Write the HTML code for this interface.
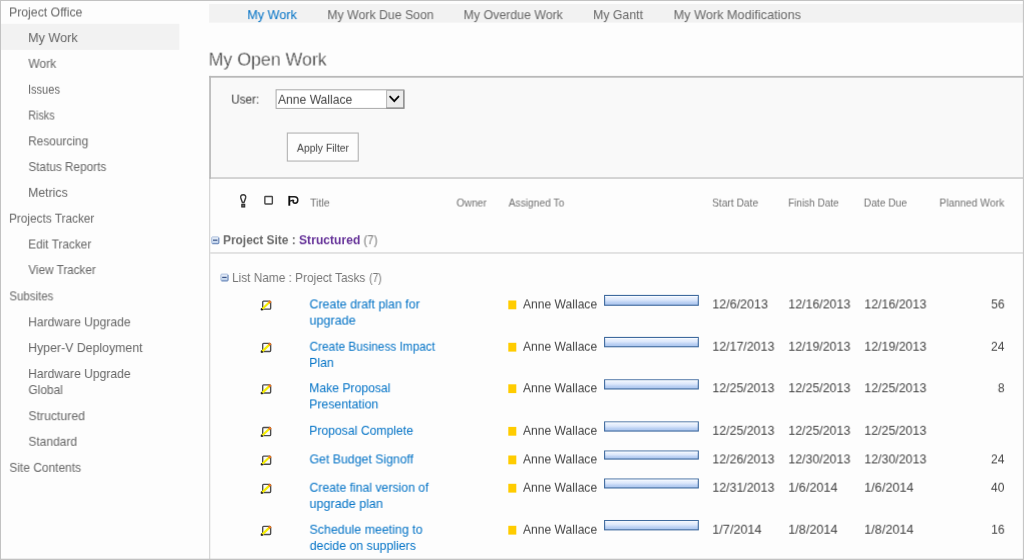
<!DOCTYPE html>
<html lang="en">
<head>
<meta charset="utf-8">
<title>My Open Work</title>
<style>
html,body{margin:0;padding:0;}
body{width:1024px;height:560px;position:relative;overflow:hidden;background:#fdfdfd;font-family:"Liberation Sans",sans-serif;}
.t{position:absolute;transform-origin:0 0;white-space:nowrap;line-height:16px;margin:0;padding:0;font-weight:400;text-decoration:none;display:block;z-index:2;}
#gfx{position:absolute;left:0;top:0;width:1024px;height:560px;z-index:1;}
</style>
</head>
<body>

<svg id="gfx" width="1024" height="560" viewBox="0 0 1024 560" aria-hidden="true">
<defs><linearGradient id="pb" x1="0" y1="0" x2="0" y2="1"><stop offset="0" stop-color="#f4f8ff"/><stop offset="0.45" stop-color="#dde8fb"/><stop offset="0.7" stop-color="#bdd2f4"/><stop offset="1" stop-color="#a9c3ec"/></linearGradient><linearGradient id="gi" x1="0" y1="0" x2="0" y2="1"><stop offset="0" stop-color="#eef3fb"/><stop offset="1" stop-color="#b9cde8"/></linearGradient></defs>
<rect x="1" y="23.8" width="178.3" height="26.1" fill="#f2f2f2"/>
<rect x="209.1" y="4.0" width="814" height="18.7" fill="#f2f2f2"/>
<rect x="209.2" y="75.9" width="814" height="102.8" fill="#f9f9f9"/>
<rect x="209.2" y="75.9" width="814" height="1.8" fill="#b9b9b9"/>
<rect x="209.2" y="177.15" width="814" height="1.75" fill="#cfcfcf"/>
<rect x="209.2" y="75.9" width="1.7" height="103" fill="#b9b9b9"/>
<rect x="209.25" y="178.5" width="0.95" height="381.5" fill="#cacaca"/>
<rect x="210.2" y="252.45" width="812.8" height="1.05" fill="#cccccc"/>
<rect x="276.1" y="89.8" width="127.8" height="18.6" fill="#fff" stroke="#a9a9a9" stroke-width="1"/>
<rect x="386.6" y="90.4" width="17.2" height="17.7" fill="#ececec" stroke="#b4b4b4" stroke-width="1"/>
<path d="M386.3 108.1 H403.8 V90.2" fill="none" stroke="#8a8a8a" stroke-width="1.2"/>
<path d="M390.1 96.6 L394.3 101.1 L398.5 96.6" fill="none" stroke="#0a0a0a" stroke-width="1.85" stroke-linecap="round" stroke-linejoin="miter"/>
<rect x="287.35" y="133.05" width="70.9" height="28" fill="#fdfdfd" stroke="#b3b3b3" stroke-width="1.1"/>
<path d="M243.2 194.7 C245.3 194.7 246 196.2 245.6 198 L244 202.4 L242.4 202.4 L240.8 198 C240.4 196.2 241.1 194.7 243.2 194.7 Z" fill="none" stroke="#3c3c3c" stroke-width="1.45" stroke-linejoin="round"/>
<rect x="241.8" y="204.3" width="2.9" height="2.7" fill="#6a6a6a" stroke="#2c2c2c" stroke-width="1.1"/>
<rect x="264.85" y="196.45" width="7.5" height="7.5" rx="0.6" fill="none" stroke="#474747" stroke-width="1.4"/>
<path d="M289.3 195.9 V205.7" stroke="#0c0c0c" stroke-width="1.9" fill="none"/>
<path d="M290 196.7 H294.3 C296.9 196.7 297.8 198.4 297.8 200.1 C297.8 202.3 296.6 203.3 295.1 203.3 C293.4 203.3 292.7 201.9 293.4 201 C293.8 200.4 293.2 200.2 292.2 200.4 L290 201.1" stroke="#1c1c1c" stroke-width="1.5" fill="none"/>
<g transform="translate(211.20 236.40)"><rect x="0.5" y="0.5" width="7.1" height="6.8" rx="0.9" fill="url(#gi)" stroke="#a3b8d9" stroke-width="0.9"/><path d="M1.2 7.3 H7 Q7.6 7.3 7.6 6.7 V1.4" fill="none" stroke="#6483b5" stroke-width="0.9"/><path d="M1.8 3.75 H6.2" stroke="#27437a" stroke-width="1.05"/></g>
<g transform="translate(220.40 273.60)"><rect x="0.5" y="0.5" width="7.1" height="6.8" rx="0.9" fill="url(#gi)" stroke="#a3b8d9" stroke-width="0.9"/><path d="M1.2 7.3 H7 Q7.6 7.3 7.6 6.7 V1.4" fill="none" stroke="#6483b5" stroke-width="0.9"/><path d="M1.8 3.75 H6.2" stroke="#27437a" stroke-width="1.05"/></g>
<g transform="translate(260.50 299.40)"><rect x="2.2" y="1.7" width="7.95" height="8.1" rx="0.9" fill="#fafafa" stroke="#4c4c4c" stroke-width="1.35"/><path d="M1.5 9.9 L8.9 2.9" stroke="#f6ee00" stroke-width="2.15" fill="none"/><path d="M8.3 3.5 L10.2 1.7" stroke="#f07820" stroke-width="2.5" fill="none"/><path d="M0.5 10.7 L0.8 8.9 L2.6 10.5 Z" fill="#1a1a1a" stroke="#1a1a1a" stroke-width="0.7"/></g>
<rect x="604.6" y="295.45" width="93.7" height="9.80" fill="url(#pb)" stroke="#3f6a9e" stroke-width="1.1"/>
<rect x="605.2" y="296.00" width="92.5" height="0.8" fill="#fbfdff" opacity="0.9"/>
<rect x="508.3" y="300.50" width="8" height="8.8" fill="#ffcc00"/>
<g transform="translate(260.50 341.70)"><rect x="2.2" y="1.7" width="7.95" height="8.1" rx="0.9" fill="#fafafa" stroke="#4c4c4c" stroke-width="1.35"/><path d="M1.5 9.9 L8.9 2.9" stroke="#f6ee00" stroke-width="2.15" fill="none"/><path d="M8.3 3.5 L10.2 1.7" stroke="#f07820" stroke-width="2.5" fill="none"/><path d="M0.5 10.7 L0.8 8.9 L2.6 10.5 Z" fill="#1a1a1a" stroke="#1a1a1a" stroke-width="0.7"/></g>
<rect x="604.6" y="337.45" width="93.7" height="9.30" fill="url(#pb)" stroke="#3f6a9e" stroke-width="1.1"/>
<rect x="605.2" y="338.00" width="92.5" height="0.8" fill="#fbfdff" opacity="0.9"/>
<rect x="508.3" y="342.80" width="8" height="8.8" fill="#ffcc00"/>
<g transform="translate(260.50 383.20)"><rect x="2.2" y="1.7" width="7.95" height="8.1" rx="0.9" fill="#fafafa" stroke="#4c4c4c" stroke-width="1.35"/><path d="M1.5 9.9 L8.9 2.9" stroke="#f6ee00" stroke-width="2.15" fill="none"/><path d="M8.3 3.5 L10.2 1.7" stroke="#f07820" stroke-width="2.5" fill="none"/><path d="M0.5 10.7 L0.8 8.9 L2.6 10.5 Z" fill="#1a1a1a" stroke="#1a1a1a" stroke-width="0.7"/></g>
<rect x="604.6" y="379.85" width="93.7" height="9.10" fill="url(#pb)" stroke="#3f6a9e" stroke-width="1.1"/>
<rect x="605.2" y="380.40" width="92.5" height="0.8" fill="#fbfdff" opacity="0.9"/>
<rect x="508.3" y="384.30" width="8" height="8.8" fill="#ffcc00"/>
<g transform="translate(260.50 425.80)"><rect x="2.2" y="1.7" width="7.95" height="8.1" rx="0.9" fill="#fafafa" stroke="#4c4c4c" stroke-width="1.35"/><path d="M1.5 9.9 L8.9 2.9" stroke="#f6ee00" stroke-width="2.15" fill="none"/><path d="M8.3 3.5 L10.2 1.7" stroke="#f07820" stroke-width="2.5" fill="none"/><path d="M0.5 10.7 L0.8 8.9 L2.6 10.5 Z" fill="#1a1a1a" stroke="#1a1a1a" stroke-width="0.7"/></g>
<rect x="604.6" y="421.95" width="93.7" height="9.10" fill="url(#pb)" stroke="#3f6a9e" stroke-width="1.1"/>
<rect x="605.2" y="422.50" width="92.5" height="0.8" fill="#fbfdff" opacity="0.9"/>
<rect x="508.3" y="426.90" width="8" height="8.8" fill="#ffcc00"/>
<g transform="translate(260.50 454.40)"><rect x="2.2" y="1.7" width="7.95" height="8.1" rx="0.9" fill="#fafafa" stroke="#4c4c4c" stroke-width="1.35"/><path d="M1.5 9.9 L8.9 2.9" stroke="#f6ee00" stroke-width="2.15" fill="none"/><path d="M8.3 3.5 L10.2 1.7" stroke="#f07820" stroke-width="2.5" fill="none"/><path d="M0.5 10.7 L0.8 8.9 L2.6 10.5 Z" fill="#1a1a1a" stroke="#1a1a1a" stroke-width="0.7"/></g>
<rect x="604.6" y="451.05" width="93.7" height="8.00" fill="url(#pb)" stroke="#3f6a9e" stroke-width="1.1"/>
<rect x="605.2" y="451.60" width="92.5" height="0.8" fill="#fbfdff" opacity="0.9"/>
<rect x="508.3" y="455.50" width="8" height="8.8" fill="#ffcc00"/>
<g transform="translate(260.50 482.70)"><rect x="2.2" y="1.7" width="7.95" height="8.1" rx="0.9" fill="#fafafa" stroke="#4c4c4c" stroke-width="1.35"/><path d="M1.5 9.9 L8.9 2.9" stroke="#f6ee00" stroke-width="2.15" fill="none"/><path d="M8.3 3.5 L10.2 1.7" stroke="#f07820" stroke-width="2.5" fill="none"/><path d="M0.5 10.7 L0.8 8.9 L2.6 10.5 Z" fill="#1a1a1a" stroke="#1a1a1a" stroke-width="0.7"/></g>
<rect x="604.6" y="479.05" width="93.7" height="8.90" fill="url(#pb)" stroke="#3f6a9e" stroke-width="1.1"/>
<rect x="605.2" y="479.60" width="92.5" height="0.8" fill="#fbfdff" opacity="0.9"/>
<rect x="508.3" y="483.80" width="8" height="8.8" fill="#ffcc00"/>
<g transform="translate(260.50 524.70)"><rect x="2.2" y="1.7" width="7.95" height="8.1" rx="0.9" fill="#fafafa" stroke="#4c4c4c" stroke-width="1.35"/><path d="M1.5 9.9 L8.9 2.9" stroke="#f6ee00" stroke-width="2.15" fill="none"/><path d="M8.3 3.5 L10.2 1.7" stroke="#f07820" stroke-width="2.5" fill="none"/><path d="M0.5 10.7 L0.8 8.9 L2.6 10.5 Z" fill="#1a1a1a" stroke="#1a1a1a" stroke-width="0.7"/></g>
<rect x="604.6" y="520.55" width="93.7" height="9.30" fill="url(#pb)" stroke="#3f6a9e" stroke-width="1.1"/>
<rect x="605.2" y="521.10" width="92.5" height="0.8" fill="#fbfdff" opacity="0.9"/>
<rect x="508.3" y="525.80" width="8" height="8.8" fill="#ffcc00"/>
<rect x="0" y="0" width="1024" height="1" fill="#c2c2c2"/>
<rect x="0" y="0" width="1" height="560" fill="#c2c2c2"/>
<rect x="0" y="558.7" width="1024" height="1.3" fill="#c2c2c2"/>
<rect x="1022.9" y="0" width="1.1" height="560" fill="#c6c6c6"/>
</svg>
<nav id="sidebar" aria-label="Quick launch">
<a class="t" href="#" style="left:9px;top:4px;font-size:13.1px;color:#666666;transform:translate(0.06px,0.45px) scaleX(0.9368) perspective(1000px) translateZ(0.001px);">Project Office</a>
<a class="t" href="#" style="left:28px;top:30px;font-size:13.1px;color:#666666;transform:translate(0.13px,0.05px) scaleX(0.9652) perspective(1000px) translateZ(0.001px);">My Work</a>
<a class="t" href="#" style="left:28px;top:55px;font-size:13.1px;color:#666666;transform:translate(0.40px,0.85px) scaleX(0.9157) perspective(1000px) translateZ(0.001px);">Work</a>
<a class="t" href="#" style="left:28px;top:81px;font-size:13.1px;color:#666666;transform:translate(0.04px,0.75px) scaleX(0.8441) perspective(1000px) translateZ(0.001px);">Issues</a>
<a class="t" href="#" style="left:28px;top:107px;font-size:13.1px;color:#666666;transform:translate(0.28px,0.55px) scaleX(0.8230) perspective(1000px) translateZ(0.001px);">Risks</a>
<a class="t" href="#" style="left:28px;top:133px;font-size:13.1px;color:#666666;transform:translate(0.19px,0.35px) scaleX(0.9070) perspective(1000px) translateZ(0.001px);">Resourcing</a>
<a class="t" href="#" style="left:28px;top:159px;font-size:13.1px;color:#666666;transform:translate(0.43px,0.05px) scaleX(0.8982) perspective(1000px) translateZ(0.001px);">Status Reports</a>
<a class="t" href="#" style="left:28px;top:184px;font-size:13.1px;color:#666666;transform:translate(0.16px,0.85px) scaleX(0.9399) perspective(1000px) translateZ(0.001px);">Metrics</a>
<a class="t" href="#" style="left:9px;top:210px;font-size:13.1px;color:#666666;transform:translate(0.10px,0.65px) scaleX(0.9016) perspective(1000px) translateZ(0.001px);">Projects Tracker</a>
<a class="t" href="#" style="left:28px;top:236px;font-size:13.1px;color:#666666;transform:translate(0.20px,0.45px) scaleX(0.9033) perspective(1000px) translateZ(0.001px);">Edit Tracker</a>
<a class="t" href="#" style="left:28px;top:262px;font-size:13.1px;color:#666666;transform:translate(0.40px,0.05px) scaleX(0.8930) perspective(1000px) translateZ(0.001px);">View Tracker</a>
<a class="t" href="#" style="left:9px;top:288px;font-size:13.1px;color:#666666;transform:translate(0.34px,0.35px) scaleX(0.8776) perspective(1000px) translateZ(0.001px);">Subsites</a>
<a class="t" href="#" style="left:28px;top:314px;font-size:13.1px;color:#666666;transform:translate(0.17px,0.25px) scaleX(0.9275) perspective(1000px) translateZ(0.001px);">Hardware Upgrade</a>
<a class="t" href="#" style="left:28px;top:340px;font-size:13.1px;color:#666666;transform:translate(0.16px,0.05px) scaleX(0.9419) perspective(1000px) translateZ(0.001px);">Hyper-V Deployment</a>
<a class="t" href="#" style="left:28px;top:365px;font-size:13.1px;color:#666666;transform:translate(0.17px,0.95px) scaleX(0.9275) perspective(1000px) translateZ(0.001px);">Hardware Upgrade</a>
<a class="t" href="#" style="left:28px;top:382px;font-size:13.1px;color:#666666;transform:translate(0.42px,0.05px) scaleX(0.9103) perspective(1000px) translateZ(0.001px);">Global</a>
<a class="t" href="#" style="left:28px;top:408px;font-size:13.1px;color:#666666;transform:translate(0.40px,0.15px) scaleX(0.9362) perspective(1000px) translateZ(0.001px);">Structured</a>
<a class="t" href="#" style="left:28px;top:433px;font-size:13.1px;color:#666666;transform:translate(0.41px,0.75px) scaleX(0.9146) perspective(1000px) translateZ(0.001px);">Standard</a>
<a class="t" href="#" style="left:9px;top:459px;font-size:13.1px;color:#666666;transform:translate(0.32px,0.85px) scaleX(0.9123) perspective(1000px) translateZ(0.001px);">Site Contents</a>
</nav>
<nav id="tabs" aria-label="Views">
<a class="t" href="#" style="left:247px;top:7px;font-size:12.8px;color:#0072c6;transform:translate(0.32px,0.10px) scaleX(0.9848) perspective(1000px) translateZ(0.001px);">My Work</a>
<a class="t" href="#" style="left:327px;top:7px;font-size:12.8px;color:#666666;transform:translate(0.34px,0.10px) scaleX(0.9609) perspective(1000px) translateZ(0.001px);">My Work Due Soon</a>
<a class="t" href="#" style="left:463px;top:7px;font-size:12.8px;color:#666666;transform:translate(0.53px,0.10px) scaleX(0.9651) perspective(1000px) translateZ(0.001px);">My Overdue Work</a>
<a class="t" href="#" style="left:593px;top:7px;font-size:12.8px;color:#666666;transform:translate(0.14px,0.10px) scaleX(0.9596) perspective(1000px) translateZ(0.001px);">My Gantt</a>
<a class="t" href="#" style="left:673px;top:7px;font-size:12.8px;color:#666666;transform:translate(0.61px,0.10px) scaleX(0.9906) perspective(1000px) translateZ(0.001px);">My Work Modifications</a>
</nav>
<main>
<h2 class="t" style="left:208px;top:51px;font-size:17.8px;color:#222;transform:translate(0.50px,0.60px) scaleX(0.9996) perspective(1000px) translateZ(0.001px);-webkit-text-stroke:0.4px #fdfdfd;">My Open Work</h2>
<form id="filter">
<label class="t" style="left:231px;top:91px;font-size:12.7px;color:#3a3a3a;transform:translate(0.28px,0.60px) scaleX(0.9204) perspective(1000px) translateZ(0.001px);">User:</label>
<span class="t" style="left:278px;top:91px;font-size:12.7px;color:#444;transform:translate(0.00px,0.80px) scaleX(0.9540) perspective(1000px) translateZ(0.001px);">Anne Wallace</span>
<span class="t" style="left:296px;top:139px;font-size:11.7px;color:#444;transform:translate(0.90px,0.70px) scaleX(0.8910) perspective(1000px) translateZ(0.001px);">Apply Filter</span>
</form>
<section id="list">
<div class="hdr">
<span class="t" style="left:310px;top:194px;font-size:11.5px;color:#717171;transform:translate(0.07px,0.50px) scaleX(0.9220) perspective(1000px) translateZ(0.001px);">Title</span>
<span class="t" style="left:456px;top:194px;font-size:11.5px;color:#717171;transform:translate(0.45px,0.50px) scaleX(0.8932) perspective(1000px) translateZ(0.001px);">Owner</span>
<span class="t" style="left:508px;top:194px;font-size:11.5px;color:#717171;transform:translate(0.60px,0.50px) scaleX(0.8903) perspective(1000px) translateZ(0.001px);">Assigned To</span>
<span class="t" style="left:712px;top:194px;font-size:11.5px;color:#717171;transform:translate(0.15px,0.50px) scaleX(0.8906) perspective(1000px) translateZ(0.001px);">Start Date</span>
<span class="t" style="left:788px;top:194px;font-size:11.5px;color:#717171;transform:translate(0.23px,0.50px) scaleX(0.8687) perspective(1000px) translateZ(0.001px);">Finish Date</span>
<span class="t" style="left:863px;top:194px;font-size:11.5px;color:#717171;transform:translate(0.81px,0.50px) scaleX(0.8894) perspective(1000px) translateZ(0.001px);">Date Due</span>
<span class="t" style="left:939px;top:194px;font-size:11.5px;color:#717171;transform:translate(0.40px,0.50px) scaleX(0.9000) perspective(1000px) translateZ(0.001px);">Planned Work</span>
</div>
<div class="grp">
<span class="t" style="left:222px;top:232px;font-size:12.7px;color:#6a6a6a;transform:translate(1.00px,0.20px) scaleX(0.9373) perspective(1000px) translateZ(0.001px);font-weight:700;">Project Site :</span>
<span class="t" style="left:298px;top:232px;font-size:12.7px;color:#663399;transform:translate(0.92px,0.20px) scaleX(0.9578) perspective(1000px) translateZ(0.001px);font-weight:700;">Structured</span>
<span class="t" style="left:363px;top:232px;font-size:12.7px;color:#777;transform:translate(0.53px,0.20px) scaleX(0.9000) perspective(1000px) translateZ(0.001px);">(7)</span>
</div>
<div class="grp">
<span class="t" style="left:232px;top:270px;font-size:12.7px;color:#777;transform:translate(0.07px,0.00px) scaleX(0.9322) perspective(1000px) translateZ(0.001px);">List Name : Project Tasks</span>
<span class="t" style="left:369px;top:270px;font-size:12.7px;color:#777;transform:translate(0.19px,0.00px) scaleX(0.8071) perspective(1000px) translateZ(0.001px);">(7)</span>
</div>
<div class="row">
<a class="t" href="#" style="left:309px;top:296px;font-size:12.7px;color:#0072c6;transform:translate(0.47px,0.40px) scaleX(0.9777) perspective(1000px) translateZ(0.001px);">Create draft plan for</a>
<a class="t" href="#" style="left:309px;top:312px;font-size:12.7px;color:#0072c6;transform:translate(0.46px,0.60px) scaleX(0.9923) perspective(1000px) translateZ(0.001px);">upgrade</a>
<span class="t" style="left:523px;top:296px;font-size:12.7px;color:#444;transform:translate(0.00px,0.40px) scaleX(0.9528) perspective(1000px) translateZ(0.001px);">Anne Wallace</span>
<span class="t" style="left:712px;top:296px;font-size:12.7px;color:#444;transform:translate(0.31px,0.40px) scaleX(0.9873) perspective(1000px) translateZ(0.001px);">12/6/2013</span>
<span class="t" style="left:788px;top:296px;font-size:12.7px;color:#444;transform:translate(0.32px,0.40px) scaleX(0.9774) perspective(1000px) translateZ(0.001px);">12/16/2013</span>
<span class="t" style="left:864px;top:296px;font-size:12.7px;color:#444;transform:translate(0.32px,0.40px) scaleX(0.9774) perspective(1000px) translateZ(0.001px);">12/16/2013</span>
<span class="t" style="left:991px;top:296px;font-size:12.7px;color:#444;transform:translate(0.17px,0.40px) scaleX(0.9500) perspective(1000px) translateZ(0.001px);">56</span>
</div>
<div class="row">
<a class="t" href="#" style="left:309px;top:338px;font-size:12.7px;color:#0072c6;transform:translate(0.50px,0.70px) scaleX(0.9321) perspective(1000px) translateZ(0.001px);">Create Business Impact</a>
<a class="t" href="#" style="left:309px;top:354px;font-size:12.7px;color:#0072c6;transform:translate(0.23px,0.90px) scaleX(0.9660) perspective(1000px) translateZ(0.001px);">Plan</a>
<span class="t" style="left:523px;top:338px;font-size:12.7px;color:#444;transform:translate(0.00px,0.70px) scaleX(0.9528) perspective(1000px) translateZ(0.001px);">Anne Wallace</span>
<span class="t" style="left:712px;top:338px;font-size:12.7px;color:#444;transform:translate(0.32px,0.70px) scaleX(0.9774) perspective(1000px) translateZ(0.001px);">12/17/2013</span>
<span class="t" style="left:788px;top:338px;font-size:12.7px;color:#444;transform:translate(0.32px,0.70px) scaleX(0.9774) perspective(1000px) translateZ(0.001px);">12/19/2013</span>
<span class="t" style="left:864px;top:338px;font-size:12.7px;color:#444;transform:translate(0.32px,0.70px) scaleX(0.9774) perspective(1000px) translateZ(0.001px);">12/19/2013</span>
<span class="t" style="left:990px;top:338px;font-size:12.7px;color:#444;transform:translate(0.94px,0.70px) scaleX(0.9500) perspective(1000px) translateZ(0.001px);">24</span>
</div>
<div class="row">
<a class="t" href="#" style="left:309px;top:380px;font-size:12.7px;color:#0072c6;transform:translate(0.24px,0.20px) scaleX(0.9607) perspective(1000px) translateZ(0.001px);">Make Proposal</a>
<a class="t" href="#" style="left:309px;top:396px;font-size:12.7px;color:#0072c6;transform:translate(0.23px,0.40px) scaleX(0.9698) perspective(1000px) translateZ(0.001px);">Presentation</a>
<span class="t" style="left:523px;top:380px;font-size:12.7px;color:#444;transform:translate(0.00px,0.20px) scaleX(0.9528) perspective(1000px) translateZ(0.001px);">Anne Wallace</span>
<span class="t" style="left:712px;top:380px;font-size:12.7px;color:#444;transform:translate(0.32px,0.20px) scaleX(0.9774) perspective(1000px) translateZ(0.001px);">12/25/2013</span>
<span class="t" style="left:788px;top:380px;font-size:12.7px;color:#444;transform:translate(0.32px,0.20px) scaleX(0.9774) perspective(1000px) translateZ(0.001px);">12/25/2013</span>
<span class="t" style="left:864px;top:380px;font-size:12.7px;color:#444;transform:translate(0.32px,0.20px) scaleX(0.9774) perspective(1000px) translateZ(0.001px);">12/25/2013</span>
<span class="t" style="left:997px;top:380px;font-size:12.7px;color:#444;transform:translate(0.82px,0.20px) scaleX(0.9500) perspective(1000px) translateZ(0.001px);">8</span>
</div>
<div class="row">
<a class="t" href="#" style="left:309px;top:422px;font-size:12.7px;color:#0072c6;transform:translate(0.24px,0.80px) scaleX(0.9634) perspective(1000px) translateZ(0.001px);">Proposal Complete</a>
<span class="t" style="left:523px;top:422px;font-size:12.7px;color:#444;transform:translate(0.00px,0.80px) scaleX(0.9528) perspective(1000px) translateZ(0.001px);">Anne Wallace</span>
<span class="t" style="left:712px;top:422px;font-size:12.7px;color:#444;transform:translate(0.32px,0.80px) scaleX(0.9774) perspective(1000px) translateZ(0.001px);">12/25/2013</span>
<span class="t" style="left:788px;top:422px;font-size:12.7px;color:#444;transform:translate(0.32px,0.80px) scaleX(0.9774) perspective(1000px) translateZ(0.001px);">12/25/2013</span>
<span class="t" style="left:864px;top:422px;font-size:12.7px;color:#444;transform:translate(0.32px,0.80px) scaleX(0.9774) perspective(1000px) translateZ(0.001px);">12/25/2013</span>
</div>
<div class="row">
<a class="t" href="#" style="left:309px;top:451px;font-size:12.7px;color:#0072c6;transform:translate(0.47px,0.40px) scaleX(0.9713) perspective(1000px) translateZ(0.001px);">Get Budget Signoff</a>
<span class="t" style="left:523px;top:451px;font-size:12.7px;color:#444;transform:translate(0.00px,0.40px) scaleX(0.9528) perspective(1000px) translateZ(0.001px);">Anne Wallace</span>
<span class="t" style="left:712px;top:451px;font-size:12.7px;color:#444;transform:translate(0.32px,0.40px) scaleX(0.9774) perspective(1000px) translateZ(0.001px);">12/26/2013</span>
<span class="t" style="left:788px;top:451px;font-size:12.7px;color:#444;transform:translate(0.32px,0.40px) scaleX(0.9774) perspective(1000px) translateZ(0.001px);">12/30/2013</span>
<span class="t" style="left:864px;top:451px;font-size:12.7px;color:#444;transform:translate(0.32px,0.40px) scaleX(0.9774) perspective(1000px) translateZ(0.001px);">12/30/2013</span>
<span class="t" style="left:990px;top:451px;font-size:12.7px;color:#444;transform:translate(0.94px,0.40px) scaleX(0.9500) perspective(1000px) translateZ(0.001px);">24</span>
</div>
<div class="row">
<a class="t" href="#" style="left:309px;top:479px;font-size:12.7px;color:#0072c6;transform:translate(0.48px,0.70px) scaleX(0.9646) perspective(1000px) translateZ(0.001px);">Create final version of</a>
<a class="t" href="#" style="left:309px;top:495px;font-size:12.7px;color:#0072c6;transform:translate(0.46px,0.90px) scaleX(0.9917) perspective(1000px) translateZ(0.001px);">upgrade plan</a>
<span class="t" style="left:523px;top:479px;font-size:12.7px;color:#444;transform:translate(0.00px,0.70px) scaleX(0.9528) perspective(1000px) translateZ(0.001px);">Anne Wallace</span>
<span class="t" style="left:712px;top:479px;font-size:12.7px;color:#444;transform:translate(0.32px,0.70px) scaleX(0.9774) perspective(1000px) translateZ(0.001px);">12/31/2013</span>
<span class="t" style="left:788px;top:479px;font-size:12.7px;color:#444;transform:translate(0.30px,0.70px) scaleX(1.0000) perspective(1000px) translateZ(0.001px);">1/6/2014</span>
<span class="t" style="left:864px;top:479px;font-size:12.7px;color:#444;transform:translate(0.30px,0.70px) scaleX(1.0000) perspective(1000px) translateZ(0.001px);">1/6/2014</span>
<span class="t" style="left:990px;top:479px;font-size:12.7px;color:#444;transform:translate(0.94px,0.70px) scaleX(0.9500) perspective(1000px) translateZ(0.001px);">40</span>
</div>
<div class="row">
<a class="t" href="#" style="left:309px;top:521px;font-size:12.7px;color:#0072c6;transform:translate(0.47px,0.70px) scaleX(0.9782) perspective(1000px) translateZ(0.001px);">Schedule meeting to</a>
<a class="t" href="#" style="left:309px;top:537px;font-size:12.7px;color:#0072c6;transform:translate(0.71px,0.90px) scaleX(0.9705) perspective(1000px) translateZ(0.001px);">decide on suppliers</a>
<span class="t" style="left:523px;top:521px;font-size:12.7px;color:#444;transform:translate(0.00px,0.70px) scaleX(0.9528) perspective(1000px) translateZ(0.001px);">Anne Wallace</span>
<span class="t" style="left:712px;top:521px;font-size:12.7px;color:#444;transform:translate(0.30px,0.70px) scaleX(1.0000) perspective(1000px) translateZ(0.001px);">1/7/2014</span>
<span class="t" style="left:788px;top:521px;font-size:12.7px;color:#444;transform:translate(0.30px,0.70px) scaleX(1.0000) perspective(1000px) translateZ(0.001px);">1/8/2014</span>
<span class="t" style="left:864px;top:521px;font-size:12.7px;color:#444;transform:translate(0.30px,0.70px) scaleX(1.0000) perspective(1000px) translateZ(0.001px);">1/8/2014</span>
<span class="t" style="left:991px;top:521px;font-size:12.7px;color:#444;transform:translate(0.17px,0.70px) scaleX(0.9500) perspective(1000px) translateZ(0.001px);">16</span>
</div>
</section>
</main>
</body>
</html>
